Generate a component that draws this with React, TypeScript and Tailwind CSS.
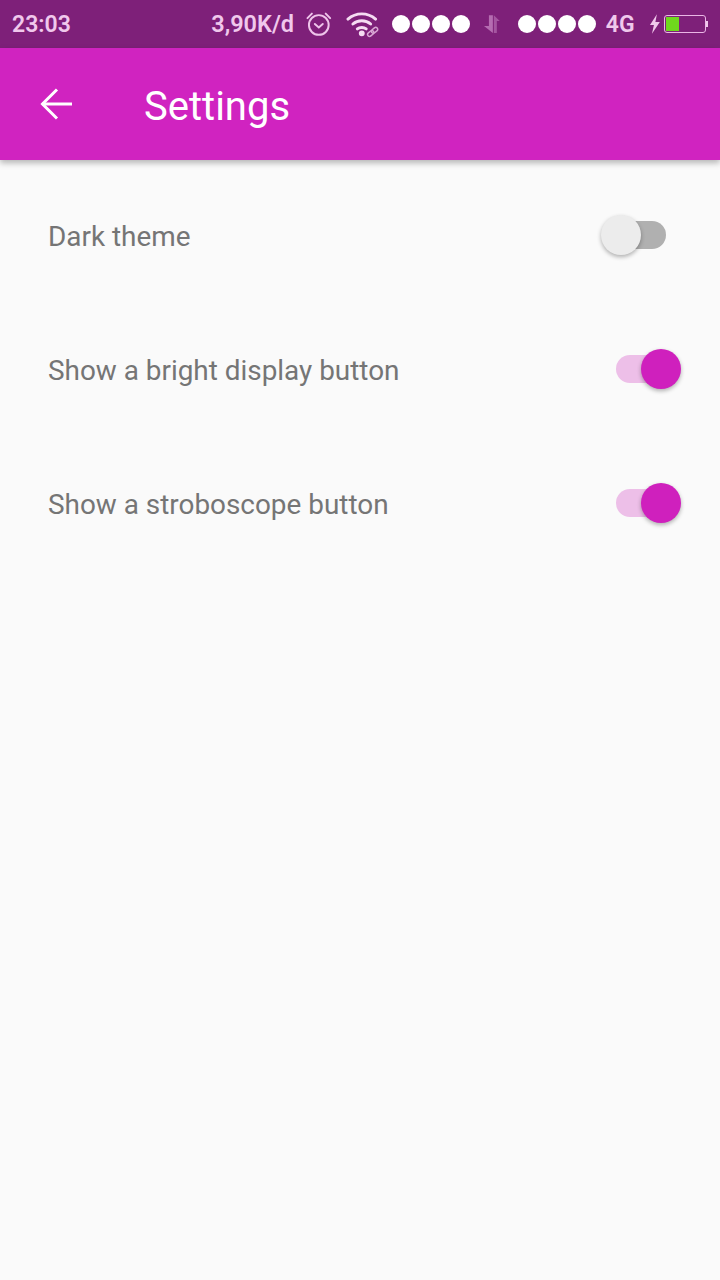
function Dots() {
  return (
    <div className="flex gap-[2px]">
      <span className="h-[18px] w-[18px] rounded-full bg-white" />
      <span className="h-[18px] w-[18px] rounded-full bg-white" />
      <span className="h-[18px] w-[18px] rounded-full bg-white" />
      <span className="h-[18px] w-[18px] rounded-full bg-white" />
    </div>
  )
}

function StatusBar() {
  return (
    <div className="flex h-12 items-center bg-[#7e2079] pl-3 pr-3 text-[23px] font-semibold text-[#f0c8ec]">
      <span className="w-[202px] pt-[2px] text-[23px]">23:03</span>
      <span className="w-[95px] pt-[2px] text-[23.5px]">3,90K/d</span>
      <svg width="28" height="28" viewBox="0 0 28 28" fill="none" stroke="#eec4ea" strokeWidth="2" strokeLinecap="round">
        <circle cx="14" cy="15" r="10" />
        <path d="M10 14l4 3.500 4-3.500" />
        <path d="M2.500 8L7 3.500M25.500 8L21 3.500" />
      </svg>
      <svg className="ml-[13px]" width="34" height="28" viewBox="0 0 34 28" fill="none" stroke="#f5dcf2" strokeWidth="3" strokeLinecap="round">
        <path d="M2 9c8-7 20-7 28 0" />
        <path d="M7 14c5-4.500 13-4.500 18 0" />
        <path d="M11.500 19c2.500-2 6.500-2 9 0" />
        <circle cx="16" cy="23.500" r="1.500" fill="#f5dcf2" />
        <g stroke="#d9a8d5" strokeWidth="1.500" transform="rotate(-40 27 22)">
          <rect x="21" y="20" width="7" height="4" rx="2" />
          <rect x="26" y="20" width="7" height="4" rx="2" />
        </g>
      </svg>
      <div className="ml-[13px]">
        <Dots />
      </div>
      <svg className="ml-[13px]" width="18" height="24" viewBox="0 0 18 24" fill="#b56cb1">
        <path d="M6 3h4v18l-9-7h5z" />
        <path d="M11 3l6 6h-3v12h-3z" opacity="0.7" />
      </svg>
      <div className="ml-[17px]">
        <Dots />
      </div>
      <span className="ml-[10px] w-[44px] pt-[2px]">4G</span>
      <svg width="13" height="24" viewBox="0 0 13 24" fill="#f0c8ec">
        <path d="M8 2L1 13h4l-2 9 8-12H6.500z" />
      </svg>
      <div className="ml-[2px] flex items-center">
        <div className="h-[18px] w-[42px] rounded-[3px] border border-[#eab6e5] p-[1px]">
          <div className="h-full w-[13px] bg-[#6fd81d]" />
        </div>
        <div className="h-[6px] w-[2px] bg-[#f0c8ec]" />
      </div>
    </div>
  )
}

function Toggle({ on }: { on: boolean }) {
  return (
    <div className="relative h-7 w-[50px]">
      <div className={on ? 'h-7 w-[50px] rounded-full bg-[#edbfe8]' : 'h-7 w-[50px] rounded-full bg-[#b0b0b0]'} />
      <div
        className={
          on
            ? 'absolute left-[25px] top-[-6px] h-10 w-10 rounded-full bg-[#cf20bd] shadow-[0_2px_4px_rgba(0,0,0,0.3)]'
            : 'absolute left-[-15px] top-[-6px] h-10 w-10 rounded-full bg-[#ececec] shadow-[0_2px_4px_rgba(0,0,0,0.3)]'
        }
      />
    </div>
  )
}

function Row({ label, on }: { label: string; on: boolean }) {
  return (
    <div className="flex h-[134px] items-center justify-between pl-12 pr-[54px]">
      <span className="pt-[4px] text-[27.9px] text-[#757575]">{label}</span>
      <Toggle on={on} />
    </div>
  )
}

export default function App() {
  return (
    <div className="flex h-[1280px] w-[720px] flex-col overflow-hidden bg-[#fafafa] font-['Roboto',sans-serif]">
      <StatusBar />
      <div className="relative flex h-28 items-center bg-[#d023c0] shadow-[0_3px_6px_rgba(0,0,0,0.28)]">
        <svg className="ml-10" width="32" height="32" viewBox="0 0 32 32" fill="none" stroke="white" strokeWidth="3">
          <path d="M32 16H2" />
          <path d="M17 1.500L2.500 16 17 30.500" />
        </svg>
        <h1 className="ml-[72px] pt-[6px] text-[40px] text-white">Settings</h1>
      </div>
      <div className="pt-[8px]">
        <Row label="Dark theme" on={false} />
        <Row label="Show a bright display button" on={true} />
        <Row label="Show a stroboscope button" on={true} />
      </div>
    </div>
  )
}
